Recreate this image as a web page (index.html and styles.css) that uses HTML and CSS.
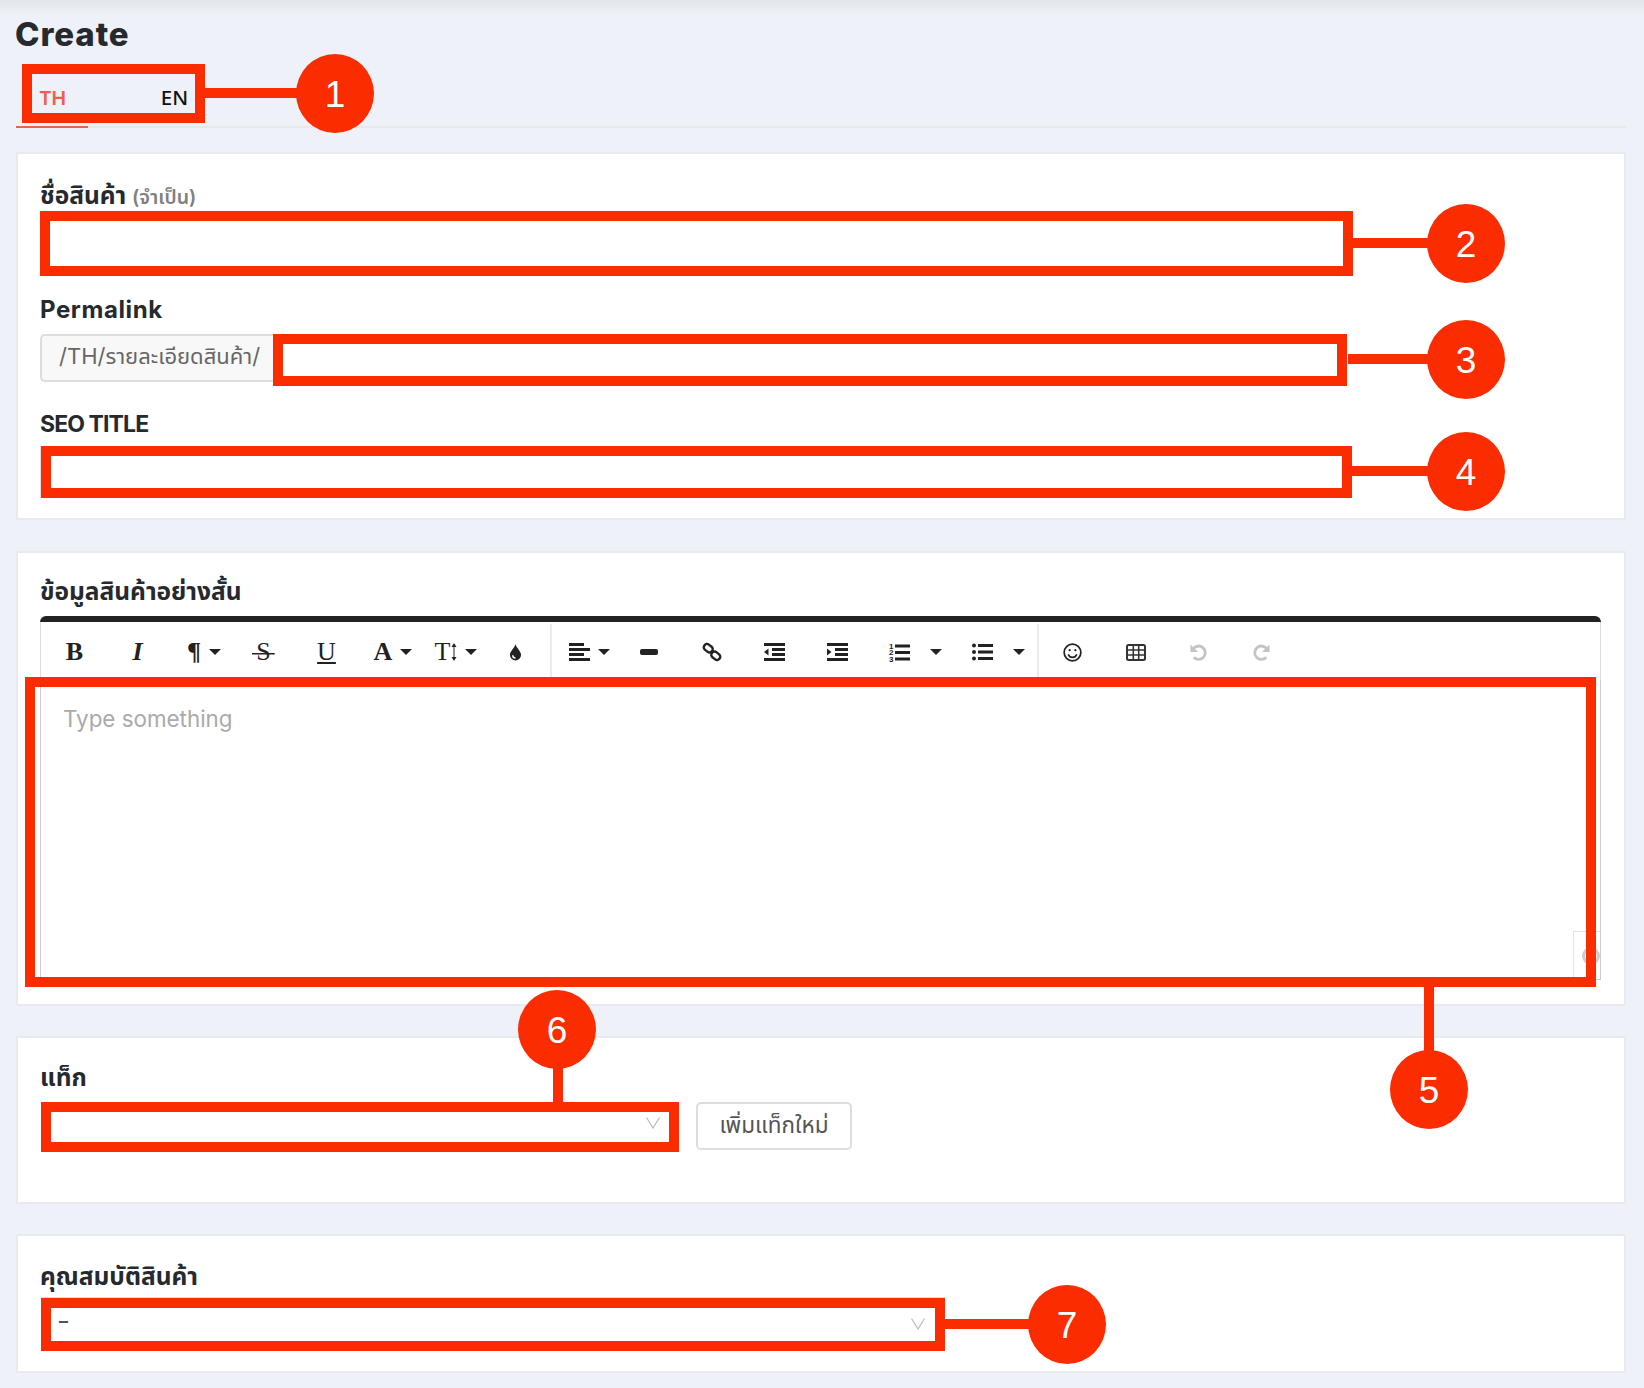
FILE: index.html

```html
<!DOCTYPE html>
<html lang="th">
<head>
    <meta charset="utf-8">
    <title>Create</title>
    <link rel="stylesheet" href="styles.css">
</head>
<body>
<div class="page">
    <div class="topbar"></div>
    <h1>Create</h1>

    <div class="tabs">
        <a class="tab active">TH</a>
        <a class="tab tab-en">EN</a>
    </div>

    <!-- ชื่อ / ลิงก์ / SEO -->
    <section class="card card-main">
        <label class="label label-th">ชื่อสินค้า <small>(จำเป็น)</small></label>
        <input class="input input-name" type="text">

        <label class="label label-permalink">Permalink</label>
        <div class="input-group">
            <span class="addon">/TH/รายละเอียดสินค้า/</span>
            <input class="input input-slug" type="text">
        </div>

        <label class="label label-seo">SEO TITLE</label>
        <input class="input input-seo" type="text">
    </section>

    <!-- ข้อมูลสินค้า -->
    <section class="card card-editor">
        <label class="label label-th">ข้อมูลสินค้าอย่างสั้น</label>
        <div class="editor">
            <div class="toolbar">
                <button class="tb serif bold">B</button>
                <button class="tb serif italic">I</button>
                <button class="tb tb-drop serif bold">¶<i class="caret"></i></button>
                <button class="tb serif"><span class="strike">S</span></button>
                <button class="tb serif"><span class="under">U</span></button>
                <button class="tb tb-drop serif bold">A<i class="caret"></i></button>
                <button class="tb tb-drop serif">T<svg class="size-arrow" viewBox="0 0 6 20" width="6" height="20"><path d="M3 1 5.500 5h-2v10h2L3 19 .5 15h2V5h-2z" fill="#222"/></svg><i class="caret"></i></button>
                <button class="tb">
                    <svg viewBox="0 0 14 18" width="13" height="17"><path d="M7 0C6 4 1 7.500 1 11.500a6 6 0 0 0 12 0C13 7.500 8 4 7 0z" fill="#222"/><path d="M4 12a3 3 0 0 0 3 3" fill="none" stroke="#fff" stroke-width="1.600"/></svg>
                </button>
                <span class="sep"></span>
                <button class="tb tb-drop">
                    <svg viewBox="0 0 21 18" width="21" height="18" fill="#222"><rect width="15" height="3" y="0"/><rect width="21" height="3" y="5"/><rect width="15" height="3" y="10"/><rect width="21" height="3" y="15"/></svg><i class="caret"></i>
                </button>
                <button class="tb">
                    <svg viewBox="0 0 18 6" width="18" height="6"><rect width="18" height="6" rx="2" fill="#222"/></svg>
                </button>
                <button class="tb">
                    <svg viewBox="0 0 20 20" width="20" height="20" fill="none" stroke="#222" stroke-width="2.400"><rect x="1.500" y="3" width="9.500" height="6.400" rx="3" transform="rotate(38 6.200 6.200)"/><rect x="9" y="10.600" width="9.500" height="6.400" rx="3" transform="rotate(38 13.800 13.800)"/></svg>
                </button>
                <button class="tb">
                    <svg viewBox="0 0 21 18" width="21" height="18" fill="#222"><rect width="21" height="3"/><rect x="8" y="5" width="13" height="3"/><rect x="8" y="10" width="13" height="3"/><rect width="21" height="3" y="15"/><path d="M0 9l4.500-3.500v7z"/></svg>
                </button>
                <button class="tb">
                    <svg viewBox="0 0 21 18" width="21" height="18" fill="#222"><rect width="21" height="3"/><rect x="8" y="5" width="13" height="3"/><rect x="8" y="10" width="13" height="3"/><rect width="21" height="3" y="15"/><path d="M4.500 9 0 5.500v7z"/></svg>
                </button>
                <button class="tb tb-list">
                    <svg viewBox="0 0 21 20" width="21" height="20"><text x="0" y="6.500" class="ol-num">1</text><text x="0" y="13" class="ol-num">2</text><text x="0" y="19.500" class="ol-num">3</text><g fill="#222"><rect x="6" y="2.500" width="15" height="3"/><rect x="6" y="9" width="15" height="3"/><rect x="6" y="15.500" width="15" height="3"/></g></svg><i class="caret caret-far"></i>
                </button>
                <button class="tb tb-list">
                    <svg viewBox="0 0 21 18" width="21" height="18" fill="#222"><circle cx="2" cy="2.500" r="2"/><circle cx="2" cy="9" r="2"/><circle cx="2" cy="15.500" r="2"/><rect x="6" y="1" width="15" height="3"/><rect x="6" y="7.500" width="15" height="3"/><rect x="6" y="14" width="15" height="3"/></svg><i class="caret caret-far"></i>
                </button>
                <span class="sep sep-end"></span>
                <button class="tb">
                    <svg viewBox="0 0 20 20" width="19" height="19" fill="none" stroke="#222" stroke-width="1.800"><circle cx="10" cy="10" r="8.800"/><path d="M5.500 12c1 2.200 2.700 3.200 4.500 3.200s3.500-1 4.500-3.200"/><circle cx="7" cy="7.500" r="1.200" fill="#222" stroke="none"/><circle cx="13" cy="7.500" r="1.200" fill="#222" stroke="none"/></svg>
                </button>
                <button class="tb">
                    <svg viewBox="0 0 20 17" width="20" height="17" fill="none" stroke="#333" stroke-width="1.600"><rect x="1" y="1" width="18" height="15" rx="1.500" stroke-width="2"/><path d="M1 6h18M1 11h18M7.300 1v15M12.700 1v15"/></svg>
                </button>
                <button class="tb">
                    <svg viewBox="0 0 20 20" width="19" height="19" fill="none" stroke="#c4c4c4" stroke-width="3"><path d="M5 15a7 7 0 1 0 -.5-9"/><path d="M1.500 1.500v8h8z" fill="#c4c4c4" stroke="none"/></svg>
                </button>
                <button class="tb">
                    <svg viewBox="0 0 20 20" width="19" height="19" fill="none" stroke="#c4c4c4" stroke-width="3"><path d="M15 15a7 7 0 1 1 .5-9"/><path d="M18.500 1.500v8h-8z" fill="#c4c4c4" stroke="none"/></svg>
                </button>
            </div>
            <div class="editor-body">
                <p class="placeholder">Type something</p>
                <div class="counter"><span class="counter-dot"></span></div>
            </div>
        </div>
    </section>

    <!-- แท็ก -->
    <section class="card card-tag">
        <label class="label label-th">แท็ก</label>
        <div class="tag-row">
            <div class="select select-tag">
                <svg class="chev" viewBox="0 0 14 12" width="14" height="12"><path d="M.5.500 7 11 13.500.500" fill="none" stroke="#bbb" stroke-width="1.200"/></svg>
            </div>
            <button class="btn">เพิ่มแท็กใหม่</button>
        </div>
    </section>

    <!-- คุณสมบัติ -->
    <section class="card card-attr">
        <label class="label label-th">คุณสมบัติสินค้า</label>
        <div class="select select-attr">
            <span class="select-value">–</span>
            <svg class="chev" viewBox="0 0 14 12" width="14" height="12"><path d="M.5.500 7 11 13.500.500" fill="none" stroke="#bbb" stroke-width="1.200"/></svg>
        </div>
    </section>

    <!-- กรอบแดงกำกับหมายเลข -->
    <div class="marks">
        <div class="box box-1"></div><div class="line line-1"></div><div class="num num-1">1</div>
        <div class="box box-2"></div><div class="line line-2"></div><div class="num num-2">2</div>
        <div class="box box-3"></div><div class="line line-3"></div><div class="num num-3">3</div>
        <div class="box box-4"></div><div class="line line-4"></div><div class="num num-4">4</div>
        <div class="box box-5"></div><div class="line line-5"></div><div class="num num-5">5</div>
        <div class="box box-6"></div><div class="line line-6"></div><div class="num num-6">6</div>
        <div class="box box-7"></div><div class="line line-7"></div><div class="num num-7">7</div>
    </div>
</div>
</body>
</html>
```

FILE: styles.css

```css
* { box-sizing: border-box; }
html, body { margin: 0; padding: 0; }
body { background: #eef1f8; color: #25282c; font-family: Inter, "Noto Sans", "Noto Sans Thai", sans-serif; }

.page { position: relative; width: 1644px; height: 1388px; overflow: hidden; }
.topbar { height: 15px; background: linear-gradient(#e3e5e9, #eef1f8); }
h1 { margin: 0 0 2px 15px; font-size: 33px; line-height: 38px; font-weight: 800; letter-spacing: .900px; color: #26292d; }

/* Tabs */
.tabs { display: flex; height: 73px; margin: 0 18px 24px 16px; border-bottom: 2px solid #e6e8ec; align-items: flex-end; }
.tab { width: 72px; height: 53px; margin-bottom: -2px; padding: 8px 0 0 1px; text-align: center; font-size: 20.500px; line-height: 28px; font-weight: 500; color: #111; font-family: "Noto Sans", sans-serif; }
.tab.active { color: #ee5f4c; border-bottom: 2px solid #ee5f4c; font-weight: 600; padding-left: 2px; }
.tab-en { margin-left: 50px; }

/* Cards */
.card { margin: 0 18px 31px 16px; background: #fff; border: 2px solid #e8eaef; padding: 0 22px; }
.card-main { height: 368px; padding-top: 26px; }
.card-editor { height: 455px; padding-top: 23px; margin-bottom: 30px; }
.card-tag { height: 168px; padding-top: 24px; margin-bottom: 30px; }
.card-attr { height: 139px; padding-top: 25px; }

.label { display: block; height: 31px; font-size: 22.500px; line-height: 31px; font-weight: 600; color: #26292d; }
.label-th { font-size: 24.500px; font-weight: 700; }
.label small { font-size: 19.500px; font-weight: 600; color: #808080; }
.label-permalink { margin: 18px 0 9px; font-size: 24px; font-weight: 700; letter-spacing: .600px; }
.label-seo { margin: 23px 0 6px; font-size: 23px; font-weight: 700; letter-spacing: -.900px; }

.input { display: block; border: 1px solid #ddd; background: #fff; outline: none; }
.input-name { width: 1313px; height: 65px; }
.input-seo { width: 1312px; height: 52px; }
.input-group { display: flex; height: 52px; align-items: flex-start; }
.addon { width: 233px; height: 48px; border: 2px solid #ddd; border-right: 0; border-radius: 5px 0 0 5px; background: #f8f8f8; color: #666; font-size: 22px; line-height: 41px; padding-left: 17px; white-space: nowrap; }
.input-slug { flex: 0 0 1074px; height: 52px; }

/* Editor */
.editor { position: relative; width: 1561px; margin-top: 9px; border-top: 6px solid #222; border-radius: 6px 6px 0 0; }
.toolbar { display: flex; height: 58px; padding: 2px 0 0 2px; border-left: 1px solid #ddd; border-right: 1px solid #ddd; background: #fff; align-items: center; }
.tb { display: flex; flex: 0 0 63px; height: 56px; margin: 0; padding: 0; border: 0; background: none; align-items: center; justify-content: center; color: #222; font-size: 26px; font-family: "Liberation Sans", sans-serif; }
.tb.serif { font-family: "Liberation Serif", serif; }
.tb.bold { font-weight: 700; }
.tb.italic { font-style: italic; font-weight: 700; }
.tb-drop { padding-left: 7px; }
.tb-list { flex-basis: 83px; padding-left: 10px; }
.strike { padding: 0 4px; background: linear-gradient(#222, #222) center 55% / 100% 1.500px no-repeat; }
.under { text-decoration: underline; text-decoration-thickness: 1.500px; text-underline-offset: 2px; }
.size-arrow { margin-left: 1px; }
.ol-num { font: 700 8px "Liberation Sans", sans-serif; fill: #222; }
.caret { display: inline-block; width: 0; height: 0; margin-left: 8px; border: 6px solid transparent; border-top-color: #222; border-bottom: 0; }
.caret-far { margin-left: 20px; }
.sep { flex: 0 0 2px; height: 56px; margin: 0 2px 0 3px; background: #ebebeb; }
.sep-end { margin: 0 2px; }
.editor-body { position: relative; height: 300px; border: 1px solid #ccc; border-top: 0; background: #fff; }
.placeholder { margin: 0; padding: 24px 0 0 22px; font-size: 22.400px; line-height: 30px; color: #aaa; }
.counter { position: absolute; right: 0; bottom: 0; width: 27px; height: 48px; border: 1px solid #e4e4e4; border-right: 0; border-bottom: 0; overflow: hidden; }
.counter-dot { position: absolute; left: 8px; top: 15px; width: 18px; height: 18px; border: 3px solid #ccc; border-radius: 50%; }

/* Tag / attr */
.tag-row { display: flex; margin-top: 9px; gap: 17px; }
.select { display: flex; height: 50px; align-items: center; justify-content: space-between; border: 1px solid #ddd; background: #fff; padding: 0 19px 0 17px; }
.select-tag { width: 638px; margin-left: 1px; justify-content: flex-end; padding-right: 18px; }
.select-tag .chev { margin-top: -8px; }
.select-attr { width: 904px; height: 53px; margin: 5px 0 0 1px; }
.select-value { margin-top: -6px; color: #555; font-size: 18px; font-weight: 600; }
.btn { width: 156px; height: 48px; padding: 0; border: 2px solid #ddd; border-radius: 5px; background: #fff; color: #555; font-size: 22.500px; font-family: inherit; }

/* Red marks over the form */
.marks { position: absolute; left: 0; top: 0; width: 100%; height: 100%; pointer-events: none; }
.box, .line, .num { position: absolute; }
.box { border: 10px solid #fb2c00; }
.line { background: #fb2c00; }
.num { width: 78px; height: 79px; border-radius: 50%; background: #fb2c00; color: #fff; font: 37px/82px "Liberation Sans", sans-serif; text-align: center; }

.box-1 { left: 22px; top: 64px; width: 183px; height: 59px; }
.line-1 { left: 205px; top: 88px; width: 92px; height: 10px; }
.num-1 { left: 296px; top: 54px; }

.box-2 { left: 40px; top: 211px; width: 1313px; height: 65px; }
.line-2 { left: 1353px; top: 238px; width: 75px; height: 10px; }
.num-2 { left: 1427px; top: 204px; }

.box-3 { left: 273px; top: 334px; width: 1074px; height: 52px; }
.line-3 { left: 1348px; top: 354px; width: 80px; height: 10px; }
.num-3 { left: 1427px; top: 320px; }

.box-4 { left: 41px; top: 446px; width: 1311px; height: 52px; }
.line-4 { left: 1352px; top: 466px; width: 76px; height: 10px; }
.num-4 { left: 1427px; top: 432px; }

.box-5 { left: 25px; top: 677px; width: 1571px; height: 310px; }
.line-5 { left: 1424px; top: 987px; width: 10px; height: 66px; }
.num-5 { left: 1390px; top: 1050px; }

.box-6 { left: 41px; top: 1102px; width: 638px; height: 50px; }
.line-6 { left: 553px; top: 1060px; width: 10px; height: 42px; }
.num-6 { left: 518px; top: 990px; }

.box-7 { left: 41px; top: 1298px; width: 904px; height: 53px; }
.line-7 { left: 945px; top: 1319px; width: 85px; height: 10px; }
.num-7 { left: 1028px; top: 1285px; }
```
